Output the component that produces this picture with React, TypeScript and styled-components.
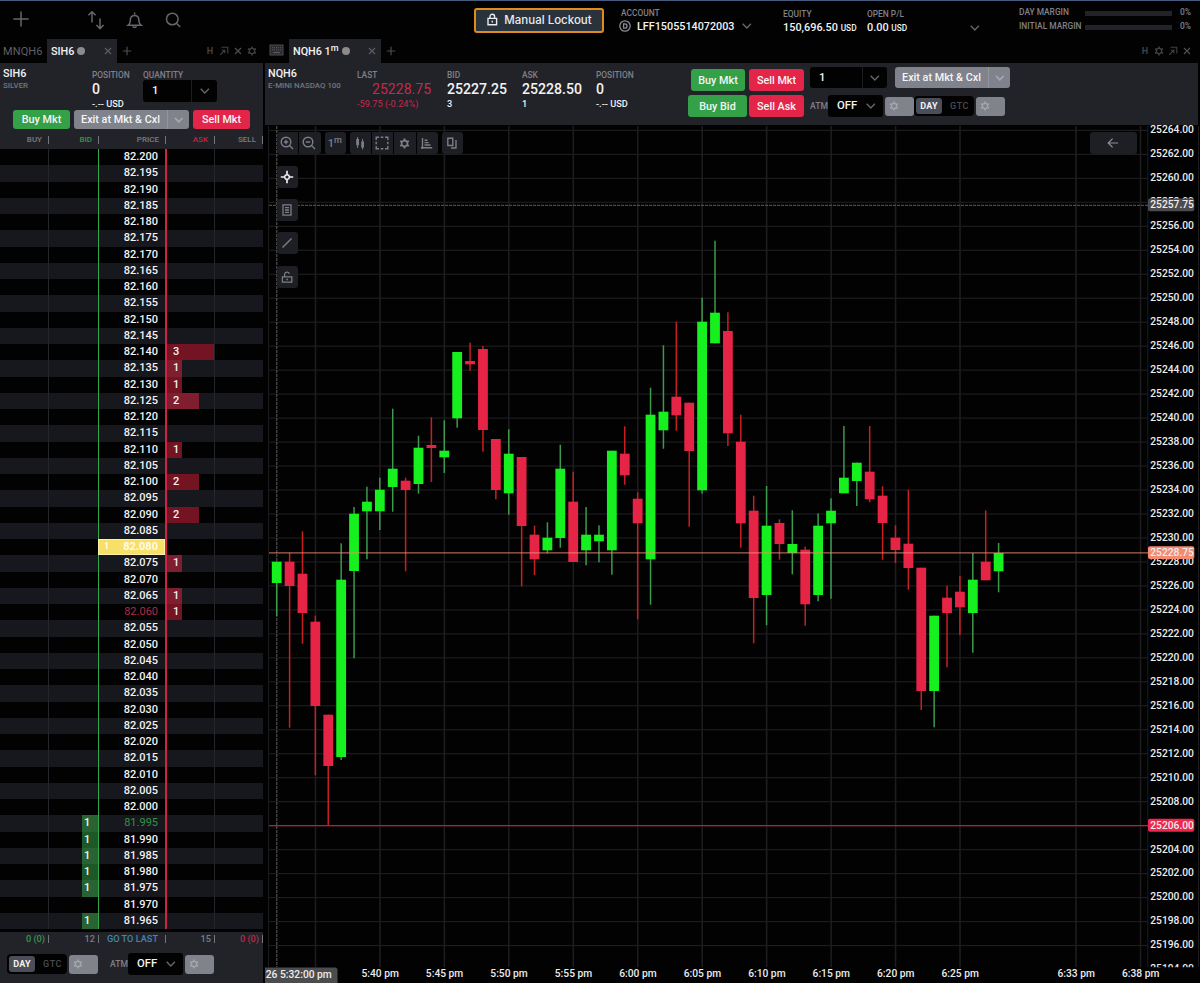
import { ReactNode } from "react";
import styled, { createGlobalStyle } from "styled-components";

const GlobalStyle = createGlobalStyle`
  * {
    box-sizing: border-box;
  }
  body {
    margin: 0;
    background: #000000;
    overflow: hidden;
    font-family: Roboto, "Liberation Sans", sans-serif;
  }
`;

const Page = styled.div`
  width: 1200px;
  height: 983px;
  display: flex;
  flex-direction: column;
  background: #020203;
  color: #f2f2f3;
  font-weight: 500;
  overflow: hidden;
  white-space: nowrap;
`;

const TopBar = styled.header`
  height: 39px;
  flex: none;
  display: flex;
  border-top: 1px solid #45597c;
`;

const TopIcon = styled.div<{ $ml: number }>`
  display: flex;
  width: 20px;
  height: 20px;
  margin: 9px 0 0 ${(p) => p.$ml}px;
  color: #66676b;
`;

const Lockout = styled.button`
  display: flex;
  align-items: center;
  justify-content: center;
  gap: 5px;
  width: 130px;
  height: 25px;
  margin: 7px 0 0 291px;
  padding: 0 0 2px;
  border: 2px solid #de8c1c;
  border-radius: 3px;
  background: #2a323c;
  color: #e9ebee;
  font: 500 11.5px Inter, sans-serif;
`;

const Account = styled.div`
  width: 162px;
  margin: 7px 0 0 17px;
`;

const AccountRow = styled.div`
  display: flex;
  align-items: center;
  gap: 6px;
  height: 14px;
  margin: 0 0 0 -2px;
  font-size: 10.8px;
`;

const Label = styled.div`
  height: 11px;
  line-height: 11px;
  font-size: 8.4px;
  color: #808188;
`;

const TopStat = styled.div<{ $w: number }>`
  width: ${(p) => p.$w}px;
  margin-top: 8px;
`;

const TopValue = styled.div`
  height: 14px;
  line-height: 14px;
  margin-top: 1px;
  font-size: 10.9px;
  small {
    font-size: 8.3px;
  }
`;

const TopChevron = styled.div`
  display: flex;
  margin: 21px 37px 0 -1px;
`;

const Margins = styled.div`
  width: 172px;
  margin: 4px 0 0 1px;
`;

const MarginRow = styled.div`
  display: flex;
  align-items: center;
  height: 14px;
  font-size: 8.4px;
  color: #808188;
  span {
    width: 66px;
  }
`;

const MarginBar = styled.div`
  width: 88px;
  height: 5px;
  margin: 2px 8px 0 0;
  background: #222329;
`;

const Workspace = styled.div`
  flex: 1;
  display: flex;
  gap: 2px;
`;

const LadderPanel = styled.section`
  width: 263px;
  display: flex;
  flex-direction: column;
`;

const ChartPanel = styled.section`
  width: 935px;
  display: flex;
  flex-direction: column;
`;

const TabRow = styled.div`
  height: 24px;
  flex: none;
  display: flex;
  align-items: center;
  color: #4c4d52;
`;

const IdleTab = styled.div`
  width: 47px;
  padding-left: 3px;
  font-size: 11px;
  font-weight: 400;
  letter-spacing: 0.1px;
  color: #5f6065;
`;

const ActiveTab = styled.div<{ $w: number }>`
  width: ${(p) => p.$w}px;
  height: 24px;
  display: flex;
  align-items: center;
  gap: 3px;
  padding: 0 4px 0 4px;
  background: #222329;
  color: #f2f2f3;
  font-size: 10.8px;
  svg {
    margin-left: auto;
  }
`;

const Minute = styled.span`
  sup {
    font-size: 9px;
    line-height: 0;
    vertical-align: 4px;
  }
`;

const Dot = styled.i`
  width: 8px;
  height: 8px;
  border-radius: 50%;
  background: #8a8b8d;
`;

const KeyboardSlot = styled.div`
  width: 24px;
  display: flex;
  padding: 0 0 2px 4px;
`;

const PlusSlot = styled.div`
  display: flex;
  margin-left: 5px;
`;

const WindowTools = styled.div<{ $mr: number }>`
  display: flex;
  align-items: center;
  gap: 4px;
  margin-left: auto;
  margin-right: ${(p) => p.$mr}px;
  opacity: 0.85;
  svg {
    display: block;
  }
`;

const LadderHead = styled.div`
  height: 70px;
  flex: none;
  background: #222329;
`;

const InfoRow = styled.div`
  display: flex;
  height: 47px;
  padding: 4px 0 0 3px;
`;

const Instrument = styled.div<{ $w: number }>`
  width: ${(p) => p.$w}px;
  font-size: 10.8px;
  line-height: 14px;
  small {
    display: block;
    height: 10px;
    line-height: 10px;
    font-size: 7.9px;
    color: #74757c;
  }
`;

const Stat = styled.div<{ $w: number }>`
  width: ${(p) => p.$w}px;
  padding-top: 2px;
`;

const StatLabel = styled(Label)`
  line-height: 12px;
`;

const Big = styled.div<{ $red?: boolean }>`
  height: 18px;
  line-height: 18px;
  font-size: 14.1px;
  ${(p) => p.$red && "color: #c32a4a; font-weight: 400; padding-left: 15px;"}
`;

const Sub = styled.div<{ $red?: boolean }>`
  height: 12px;
  line-height: 12px;
  font-size: 9.2px;
  ${(p) => p.$red && "color: #c32a4a; font-weight: 400;"}
`;

const Select = styled.div<{ $w: number; $h: number; $split?: number }>`
  width: ${(p) => p.$w}px;
  height: ${(p) => p.$h}px;
  flex: none;
  display: flex;
  border-radius: 3px;
  background: #020203;
  font-size: 11.3px;
  line-height: ${(p) => p.$h}px;
  > span {
    flex: 1;
    padding-left: 9px;
  }
  > div {
    width: ${(p) => p.$split ?? 25}px;
    display: flex;
    align-items: center;
    justify-content: center;
    border-left: 1px solid ${(p) => (p.$split ? "#1c1d22" : "transparent")};
  }
`;

const ButtonRow = styled.div`
  display: flex;
  gap: 4px;
  padding-left: 13px;
`;

const fills = { buy: "#34a149", sell: "#e32549", grey: "#80838c" };

const Btn = styled.button<{ $kind: keyof typeof fills; $w: number; $h: number }>`
  width: ${(p) => p.$w}px;
  height: ${(p) => p.$h}px;
  flex: none;
  display: flex;
  align-items: center;
  justify-content: center;
  padding: 0;
  border: none;
  border-radius: 3px;
  background: ${(p) => fills[p.$kind]};
  color: #f4f5f6;
  font: 500 10.8px Roboto, sans-serif;
`;

const ExitMain = styled.span`
  flex: 1;
  text-align: center;
`;

const ExitArrow = styled.span`
  width: 22px;
  height: 100%;
  display: flex;
  align-items: center;
  justify-content: center;
  border-left: 1px solid #94969e;
`;

const Columns = styled.div`
  height: 16px;
  flex: none;
  display: flex;
  background: #222329;
  font-size: 8px;
  line-height: 13px;
  color: #808188;
`;

const columnColors = { plain: "#7b7c83", green: "#34984a", red: "#b82a48", blue: "#4384b5" };

const Column = styled.div<{ $w: number; $tone?: keyof typeof columnColors }>`
  width: ${(p) => p.$w}px;
  position: relative;
  padding-right: 7px;
  text-align: right;
  color: ${(p) => columnColors[p.$tone ?? "plain"]};
  &::after {
    content: "";
    position: absolute;
    right: 0;
    top: 3px;
    width: 1px;
    height: 8px;
    background: #74757c;
  }
`;

const Ladder = styled.div`
  height: 783px;
  flex: none;
`;

const LadderRow = styled.div<{ $odd: boolean }>`
  display: flex;
  height: 16.255px;
  line-height: 15px;
  background: ${(p) => (p.$odd ? "#17181d" : "#020203")};
  font-size: 11px;
`;

const Cell = styled.div<{ $w: number; $line: string; $lw?: number }>`
  width: ${(p) => p.$w}px;
  height: 100%;
  display: flex;
  border-right: ${(p) => p.$lw ?? 1}px solid ${(p) => p.$line};
`;

const BidSize = styled.div`
  width: 16px;
  margin-left: auto;
  padding-left: 2px;
  background: rgba(56, 168, 72, 0.52);
`;

const AskSize = styled.div<{ $qty: number }>`
  width: ${(p) => [0, 15, 32, 48][p.$qty]}px;
  padding-left: 6px;
  background: rgba(230, 35, 65, 0.5);
`;

const priceColors = { normal: "#f2f2f3", low: "#b02a46", high: "#309345", last: "#fffbe8" };

const Price = styled.div<{ $tone: keyof typeof priceColors }>`
  flex: 1;
  display: flex;
  justify-content: space-between;
  padding: 0 7px 0 7px;
  color: ${(p) => priceColors[p.$tone]};
  font-weight: ${(p) => (p.$tone === "normal" ? 500 : p.$tone === "last" ? 700 : 400)};
  ${(p) =>
    p.$tone === "last" &&
    `
    margin-left: -1px;
    padding: 0 6px 0 5px;
    border: 1px solid #fdf0a8;
    background: #f8df68;
    line-height: 13px;
  `}
  small {
    font-size: 9px;
  }
`;

const LadderFoot = styled.div`
  flex: 1;
  background: #222329;
`;

const TotalsRow = styled(Columns)`
  height: 21px;
  font-size: 9.2px;
  line-height: 13px;
  ${Column} {
    padding-right: 4px;
  }
`;

const Tint = styled.span<{ $tone: keyof typeof columnColors }>`
  color: ${(p) => columnColors[p.$tone]};
  ${(p) => p.$tone === "blue" && "font-size: 9.2px; margin-right: 4px;"}
`;

const ControlRow = styled.div<{ $pl: number }>`
  display: flex;
  align-items: center;
  height: 22px;
  padding-left: ${(p) => p.$pl}px;
`;

const Tif = styled.div`
  width: 60px;
  height: 20px;
  flex: none;
  display: flex;
  align-items: center;
  padding: 2px;
  border-radius: 4px;
  background: #020203;
  font-size: 9px;
  letter-spacing: 0.5px;
  color: #4a4b51;
  b {
    width: 26px;
    height: 16px;
    margin-right: 8px;
    border-radius: 3px;
    background: #4b4d58;
    color: #f2f2f3;
    line-height: 16px;
    text-align: center;
    letter-spacing: 0.2px;
    font-weight: 700;
  }
`;

const GearBtn = styled.div<{ $ml: number }>`
  width: 29px;
  height: 19px;
  flex: none;
  display: flex;
  align-items: center;
  margin-left: ${(p) => p.$ml}px;
  padding-left: 4px;
  border-radius: 3px;
  background: #80838c;
  color: #a5a7ae;
`;

const AtmLabel = styled.div<{ $ml: number }>`
  width: 18px;
  margin-left: ${(p) => p.$ml}px;
  font-size: 8.6px;
  color: #808188;
`;

const ChartHead = styled.div`
  height: 62px;
  width: 933px;
  flex: none;
  display: flex;
  padding: 4px 0 0 3px;
  background: #222329;
`;

const TradeButtons = styled.div`
  width: 122px;
  display: flex;
  flex-wrap: wrap;
  justify-content: flex-end;
  align-content: flex-start;
  gap: 4px 2px;
  padding: 2px 6px 0 0;
`;

const Controls = styled.div`
  display: flex;
  flex-direction: column;
  gap: 7px;
`;

const ExitRow = styled.div`
  display: flex;
  gap: 8px;
`;

const ChartBody = styled.div`
  position: relative;
  flex: 1;
`;

const Toolbar = styled.div`
  position: absolute;
  left: 12px;
  top: 7px;
  display: flex;
  gap: 4px;
`;

const ToolGroup = styled.div`
  display: flex;
  gap: 1px;
  border-radius: 3px;
  overflow: hidden;
`;

const SideTools = styled.div`
  position: absolute;
  left: 12px;
  top: 41px;
  display: flex;
  flex-direction: column;
  gap: 11.2px;
`;

const Tool = styled.div<{ $w?: number; $round?: boolean }>`
  width: ${(p) => p.$w ?? 21.3}px;
  height: 22px;
  display: flex;
  align-items: center;
  justify-content: center;
  padding-right: 1px;
  border-radius: ${(p) => (p.$round ? 3 : 0)}px;
  background: #1e1f24;
  color: #7c7e85;
  font-size: 11px;
`;

const BackTool = styled.div`
  position: absolute;
  left: 825px;
  top: 7px;
`;

type IconProps = { size?: number; w?: number; children: ReactNode; box?: number };

const Icon = ({ size = 12, box = 12, w = 1, children }: IconProps) => (
  <svg
    width={size}
    height={size}
    viewBox={`0 0 ${box} ${box}`}
    fill="none"
    stroke="currentColor"
    strokeWidth={w}
  >
    {children}
  </svg>
);

const Chevron = () => (
  <Icon size={12} w={1.4}>
    <path d="M1.7 3.8l4.1 4.2L9.900 3.800" stroke="#66676e" />
  </Icon>
);

const PaleChevron = () => (
  <Icon size={12} w={1.6}>
    <path d="M2 4l3.8 3.800L9.600 4" stroke="#a8aab1" />
  </Icon>
);

const Cross = () => (
  <Icon size={10} box={10} w={1.2}>
    <path d="M2 2l6 6M8 2L2 8" stroke="#5c5d63" />
  </Icon>
);

const Plus = () => (
  <Icon size={10} box={10} w={1.2}>
    <path d="M5 .8v8.4M.8 5h8.4" />
  </Icon>
);

const Gear = ({ size = 10, w = 1.6 }: { size?: number; w?: number }) => (
  <Icon size={size} w={w}>
    <circle cx="6" cy="6" r="3.2" />
    <path
      d="M6 .6v2M6 9.4v2M1.3 3.3l1.7 1M9 7.7l1.7 1M1.3 8.7l1.7-1M9 4.3l1.7-1"
      strokeWidth={w + 0.3}
    />
  </Icon>
);

const Popout = () => (
  <Icon size={10} box={10} w={1.1}>
    <path d="M2.5 1.2h6.3v6.3M1.2 8.8l4.3-4.3M2.8 4.2h3v3" />
  </Icon>
);

const LetterH = styled.span`
  width: 10px;
  text-align: center;
  font-size: 9px;
  font-weight: 700;
`;

const asks: Record<string, number> = {
  "82.140": 3,
  "82.135": 1,
  "82.130": 1,
  "82.125": 2,
  "82.110": 1,
  "82.100": 2,
  "82.090": 2,
  "82.075": 1,
  "82.065": 1,
  "82.060": 1,
};

const bids = ["81.995", "81.990", "81.985", "81.980", "81.975", "81.965"];

const tones: Record<string, keyof typeof priceColors> = {
  "82.080": "last",
  "82.060": "low",
  "81.995": "high",
};

const prices = Array.from({ length: 48 }, (_, i) => (82.2 - i * 0.005).toFixed(3));

// direction, body top, body bottom, wick top, wick bottom
type Candle = ["g" | "r", number, number, number, number];

const candles: Candle[] = [
  ["g", 561.7, 583, 561.7, 616],
  ["r", 561.7, 586, 552.7, 727.7],
  ["r", 573.7, 613, 531.3, 643.7],
  ["r", 621.7, 706, 615.7, 775.3],
  ["r", 714.7, 766, 714.7, 826],
  ["g", 579.7, 757, 543.3, 760],
  ["g", 513.7, 571, 507, 658.3],
  ["g", 501.7, 511.3, 486.7, 559.3],
  ["g", 489.7, 511.3, 477.7, 530],
  ["g", 468.7, 487, 408.7, 511.7],
  ["r", 480.7, 490, 477.7, 571.3],
  ["g", 447.7, 484, 435.7, 493.7],
  ["r", 445, 448, 417.3, 482],
  ["g", 450.7, 457.3, 420.3, 473],
  ["g", 352, 418.3, 352, 427.7],
  ["r", 361, 364.3, 342.7, 370.7],
  ["r", 349, 430, 346, 451.7],
  ["r", 439, 490, 439, 499.3],
  ["g", 453.7, 493.3, 429.3, 514.7],
  ["r", 457, 526, 457, 586.3],
  ["r", 534.7, 559.3, 525.7, 575],
  ["g", 537.7, 550.3, 522.3, 553.3],
  ["g", 468.7, 538, 444.7, 547.7],
  ["r", 501.7, 562, 471.7, 562],
  ["g", 534.7, 550.3, 507, 565.3],
  ["g", 534.7, 541.3, 525.3, 562.3],
  ["g", 450.7, 550.3, 450.7, 574.7],
  ["r", 453.7, 475.3, 426.3, 484.7],
  ["r", 498.7, 523.3, 492.3, 619.3],
  ["g", 414.7, 559.3, 387.7, 604.7],
  ["g", 411.7, 430.3, 345.3, 448.7],
  ["r", 396.7, 415.3, 321.7, 430.7],
  ["r", 402.7, 451, 402.7, 526.7],
  ["g", 321.7, 490.3, 297.7, 493.7],
  ["g", 312.7, 343.3, 240.7, 343.3],
  ["r", 331, 433.3, 312.3, 446],
  ["r", 441.7, 523.3, 414.7, 547.7],
  ["r", 510.7, 598, 495.7, 643.3],
  ["g", 525.7, 595, 486, 625.3],
  ["r", 523, 544, 519.3, 559.7],
  ["g", 544, 553, 510.3, 574.3],
  ["r", 549.7, 604.3, 546.7, 625.7],
  ["g", 525.7, 595, 513.3, 601.3],
  ["g", 510.7, 523.3, 498.3, 598.7],
  ["g", 477.7, 493.3, 426, 493.3],
  ["g", 462.7, 481, 462.7, 506],
  ["r", 471.7, 499.3, 426, 502.3],
  ["r", 495.7, 523, 486.3, 559.7],
  ["r", 537.7, 550, 525.3, 563],
  ["r", 543.7, 568, 489.7, 589.7],
  ["r", 567.7, 691, 567.7, 710],
  ["g", 615.7, 691, 615.7, 727.3],
  ["r", 597.7, 613, 585.7, 667.3],
  ["r", 591.7, 607.3, 576, 635],
  ["g", 579.7, 613, 553, 652.7],
  ["r", 561.7, 580.3, 510.3, 580.3],
  ["g", 553, 571.3, 543, 592.3],
];

const minuteX = (i: number) => 276.6 + i * 12.891;
const priceY = (p: number) => 130.4 + (25264 - p) * 11.987;

const gridPrices = Array.from({ length: 36 }, (_, i) => 25264 - i * 2);

const timeMarks: [number, string][] = [
  [3, ""],
  [8, "5:40 pm"],
  [13, "5:45 pm"],
  [18, "5:50 pm"],
  [23, "5:55 pm"],
  [28, "6:00 pm"],
  [33, "6:05 pm"],
  [38, "6:10 pm"],
  [43, "6:15 pm"],
  [48, "6:20 pm"],
  [53, "6:25 pm"],
  [62, "6:33 pm"],
  [67, "6:38 pm"],
];

const PlotSvg = styled.svg`
  display: block;
  text {
    font: 500 10.25px Roboto, sans-serif;
    fill: #ececed;
  }
`;

function PriceTag({ price, fill }: { price: number; fill: string }) {
  const y = priceY(price);
  return (
    <g>
      <rect x="1148" y={y - 6.8} width="46.3" height="12.8" rx="2" fill={fill} />
      <text x="1150.3" y={y + 2.9}>
        {price.toFixed(2)}
      </text>
    </g>
  );
}

function Plot() {
  return (
    <PlotSvg width="935" height="858" viewBox="265 125 935 858">
      <clipPath id="plotArea">
        <rect x="265" y="125" width="935" height="842.3" />
      </clipPath>
      <g clipPath="url(#plotArea)">
        {gridPrices.map((p) => (
          <rect key={p} x="269" y={priceY(p) - 0.6} width="879" height="1.2" fill="#1d1d1f" />
        ))}
        {timeMarks.map(([i]) => (
          <rect key={i} x={minuteX(i) - 0.6} y="126" width="1.6" height="842" fill="#1d1d1f" />
        ))}
        <path d="M268.6 126V967M1147.8 126V967M1198.5 126V967" stroke="#1d1d20" />
        <path d="M269 205.3H1148" stroke="#5e5e5e" strokeDasharray="3 1" />
        <path d="M276.8 126V967" stroke="#5e5e5e" strokeDasharray="3 1" />
        {candles.map(([dir, top, bottom, high, low], i) => (
          <g key={i}>
            <rect
              x={minuteX(i) - 0.65}
              y={high}
              width="1.5"
              height={low - high}
              fill={dir === "g" ? "#3d9a4c" : "#c91f22"}
            />
            <rect
              x={minuteX(i) - 4.8}
              y={top}
              width="9.8"
              height={bottom - top}
              fill={dir === "g" ? "#16f01e" : "#e62546"}
            />
          </g>
        ))}
        <path d="M269 552.9H1148" stroke="#f08a70" strokeOpacity="0.72" strokeWidth="1.4" />
        <path d="M269 825.7H1148" stroke="#c41a38" strokeWidth="1.3" />
        {gridPrices.map((p) => (
          <text key={p} x="1150.3" y={priceY(p) + 2.9}>
            {p.toFixed(2)}
          </text>
        ))}
      </g>
      <PriceTag price={25257.75} fill="#4c4c4e" />
      <PriceTag price={25228.75} fill="#f48b70" />
      <PriceTag price={25206} fill="#f0274c" />
      {timeMarks.map(([i, label]) => (
        <text key={i} x={minuteX(i) + 0.4} y="977.4" textAnchor="middle">
          {label}
        </text>
      ))}
      <path d="M265 967.5h70a2.5 2.5 0 0 1 2.5 2.500v13H265z" fill="#4c4c4e" />
      <text x="265.8" y="977.7">
        26 5:32:00 pm
      </text>
    </PlotSvg>
  );
}

function ExitButton({ w, h }: { w: number; h: number }) {
  return (
    <Btn $kind="grey" $w={w} $h={h}>
      <ExitMain>Exit at Mkt &amp; Cxl</ExitMain>
      <ExitArrow>
        <PaleChevron />
      </ExitArrow>
    </Btn>
  );
}

function TimeInForce() {
  return (
    <Tif>
      <b>DAY</b>GTC
    </Tif>
  );
}

function LadderView() {
  return (
    <LadderPanel>
      <TabRow>
        <IdleTab>MNQH6</IdleTab>
        <ActiveTab $w={70}>
          SIH6 <Dot />
          <Cross />
        </ActiveTab>
        <PlusSlot>
          <Plus />
        </PlusSlot>
        <WindowTools $mr={6}>
          <LetterH>H</LetterH>
          <Popout />
          <Cross />
          <Gear />
        </WindowTools>
      </TabRow>
      <LadderHead>
        <InfoRow>
          <Instrument $w={89}>
            SIH6<small>SILVER</small>
          </Instrument>
          <Stat $w={51}>
            <StatLabel>POSITION</StatLabel>
            <Big>0</Big>
            <Sub>-.-- USD</Sub>
          </Stat>
          <Stat $w={80}>
            <StatLabel>QUANTITY</StatLabel>
            <Select $w={74} $h={22} $split={26}>
              <span>1</span>
              <div>
                <Chevron />
              </div>
            </Select>
          </Stat>
        </InfoRow>
        <ButtonRow>
          <Btn $kind="buy" $w={57} $h={19}>
            Buy Mkt
          </Btn>
          <ExitButton w={115} h={19} />
          <Btn $kind="sell" $w={57} $h={19}>
            Sell Mkt
          </Btn>
        </ButtonRow>
      </LadderHead>
      <Columns>
        <Column $w={49}>BUY</Column>
        <Column $w={50} $tone="green">
          BID
        </Column>
        <Column $w={67}>PRICE</Column>
        <Column $w={49} $tone="red">
          ASK
        </Column>
        <Column $w={48}>SELL</Column>
      </Columns>
      <Ladder>
        {prices.map((price, i) => {
          const tone = tones[price] ?? "normal";
          return (
            <LadderRow key={price} $odd={i % 2 === 1}>
              <Cell $w={49} $line="#25262b" />
              <Cell $w={50} $line="#35a64c">
                {bids.includes(price) && <BidSize>1</BidSize>}
              </Cell>
              <Cell $w={68} $line="#cf2245" $lw={2}>
                <Price $tone={tone}>
                  <small>{tone === "last" ? "1" : ""}</small>
                  {price}
                </Price>
              </Cell>
              <Cell $w={48} $line="#25262b">
                {asks[price] && <AskSize $qty={asks[price]}>{asks[price]}</AskSize>}
              </Cell>
            </LadderRow>
          );
        })}
      </Ladder>
      <LadderFoot>
        <TotalsRow>
          <Column $w={49}>
            <Tint $tone="green">0 (0)</Tint>
          </Column>
          <Column $w={50}>12</Column>
          <Column $w={67}>
            <Tint $tone="blue">GO TO LAST</Tint>
          </Column>
          <Column $w={49}>15</Column>
          <Column $w={48}>
            <Tint $tone="red">0 (0)</Tint>
          </Column>
        </TotalsRow>
        <ControlRow $pl={7}>
          <TimeInForce />
          <GearBtn $ml={2}>
            <Gear />
          </GearBtn>
          <AtmLabel $ml={12}>ATM</AtmLabel>
          <Select $w={55} $h={22}>
            <span>OFF</span>
            <div>
              <Chevron />
            </div>
          </Select>
          <GearBtn $ml={2}>
            <Gear />
          </GearBtn>
        </ControlRow>
      </LadderFoot>
    </LadderPanel>
  );
}

function ChartView() {
  return (
    <ChartPanel>
      <TabRow>
        <KeyboardSlot>
          <svg width="15" height="12" viewBox="0 0 15 12" fill="none">
            <rect x="1" y="1" width="13" height="10" fill="#2b2c30" stroke="#4c4d52" />
            <path d="M3 3.7h9M3 5.9h9" stroke="#5c5d62" strokeDasharray="1 1" />
            <path d="M4 8.5h7" stroke="#5c5d62" />
          </svg>
        </KeyboardSlot>
        <ActiveTab $w={92}>
          <Minute>
            NQH6 1<sup>m</sup>
          </Minute>
          <Dot />
          <Cross />
        </ActiveTab>
        <PlusSlot>
          <Plus />
        </PlusSlot>
        <WindowTools $mr={8}>
          <LetterH>H</LetterH>
          <Gear />
          <Popout />
          <Cross />
        </WindowTools>
      </TabRow>
      <ChartHead>
        <Instrument $w={89}>
          NQH6<small>E-MINI NASDAQ 100</small>
        </Instrument>
        <Stat $w={90}>
          <StatLabel>LAST</StatLabel>
          <Big $red>25228.75</Big>
          <Sub $red>-59.75 (-0.24%)</Sub>
        </Stat>
        <Stat $w={75}>
          <StatLabel>BID</StatLabel>
          <Big>25227.25</Big>
          <Sub>3</Sub>
        </Stat>
        <Stat $w={74}>
          <StatLabel>ASK</StatLabel>
          <Big>25228.50</Big>
          <Sub>1</Sub>
        </Stat>
        <Stat $w={92}>
          <StatLabel>POSITION</StatLabel>
          <Big>0</Big>
          <Sub>-.-- USD</Sub>
        </Stat>
        <TradeButtons>
          <Btn $kind="buy" $w={54} $h={22}>
            Buy Mkt
          </Btn>
          <SellBtn $kind="sell" $w={55} $h={22}>
            Sell Mkt
          </SellBtn>
          <Btn $kind="buy" $w={59} $h={22}>
            Buy Bid
          </Btn>
          <Btn $kind="sell" $w={55} $h={22}>
            Sell Ask
          </Btn>
        </TradeButtons>
        <Controls>
          <ExitRow>
            <Select $w={77} $h={21} $split={25}>
              <span>1</span>
              <div>
                <Chevron />
              </div>
            </Select>
            <ExitButton w={115} h={21} />
          </ExitRow>
          <ControlRow $pl={0}>
            <AtmLabel $ml={0}>ATM</AtmLabel>
            <Select $w={55} $h={22}>
              <span>OFF</span>
              <div>
                <Chevron />
              </div>
            </Select>
            <GearBtn $ml={2}>
              <Gear />
            </GearBtn>
            <TimeInForce />
            <GearBtn $ml={2}>
              <Gear />
            </GearBtn>
          </ControlRow>
        </Controls>
      </ChartHead>
      <ChartBody>
        <Plot />
        <Toolbar>
          <ToolGroup>
            <Tool>
              <Icon size={14} box={14} w={1.4}>
                <circle cx="6" cy="6" r="4.8" />
                <path d="M9.5 9.5l3.5 3.5M6 3.8v4.4M3.8 6h4.4" />
              </Icon>
            </Tool>
            <Tool>
              <Icon size={14} box={14} w={1.4}>
                <circle cx="6" cy="6" r="4.8" />
                <path d="M9.5 9.5l3.5 3.5M3.8 6h4.4" />
              </Icon>
            </Tool>
          </ToolGroup>
          <ToolGroup>
            <Tool>
              <Minute>
                1<sup>m</sup>
              </Minute>
            </Tool>
          </ToolGroup>
          <ToolGroup>
            <Tool>
              <Icon size={14} box={14}>
                <path d="M4.6 1v11M9.6 3v10.5" />
                <path d="M4.6 3v6.2M9.6 5.5v6" strokeWidth="2.8" />
              </Icon>
            </Tool>
            <Tool>
              <Icon size={14} box={14} w={1.4}>
                <path d="M1.2 4V1.2H4M10 1.2h2.8V4M12.8 10v2.8H10M4 12.8H1.2V10M5.7 1.2h2.6M5.7 12.8h2.6M1.2 5.7v2.6M12.8 5.7v2.6" />
              </Icon>
            </Tool>
            <Tool>
              <Gear size={11} w={1.8} />
            </Tool>
            <Tool>
              <Icon size={13} box={13} w={1.4}>
                <path d="M2.5 1v11M.8 10.8h11.4M4.5 3.2h3M4.5 5.6h4.2M4.5 8h6" />
              </Icon>
            </Tool>
          </ToolGroup>
          <ToolGroup>
            <Tool>
              <Icon size={12} w={1.4}>
                <path d="M1.8 1.3h5v7.2h-5zM10 3v8H5" />
              </Icon>
            </Tool>
          </ToolGroup>
        </Toolbar>
        <SideTools>
          <Tool $round>
            <Icon size={14} box={14} w={1.7}>
              <circle cx="7" cy="7" r="2.3" stroke="#eeeef0" strokeWidth="1.5" />
              <path d="M7 .8v3.600M7 9.600v3.600M.8 7h3.600M9.600 7h3.600" stroke="#eeeef0" />
            </Icon>
          </Tool>
          <Tool $round>
            <Icon size={12} w={1.3}>
              <path d="M2 .8h8v10.4H2zM4 3.600h4M4 6h4M4 8.400h4" />
            </Icon>
          </Tool>
          <Tool $round>
            <Icon size={12} w={1.5}>
              <path d="M1.5 10.5l9-9" />
            </Icon>
          </Tool>
          <Tool $round>
            <Icon size={12} w={1.3}>
              <path d="M1.4 5.8h9.4v5.4H1.4zM3.6 5.5V3.2a2.4 2.4 0 0 1 4.7-.4" />
              <path d="M5.3 8.5h1.6" strokeWidth="1.6" />
            </Icon>
          </Tool>
        </SideTools>
        <BackTool>
          <Tool $w={47} $round>
            <Icon size={12} w={1.2}>
              <path d="M11 6H1.4M5.6 1.6L1.2 6l4.4 4.4" stroke="#8f9097" />
            </Icon>
          </Tool>
        </BackTool>
      </ChartBody>
    </ChartPanel>
  );
}

const SellBtn = styled(Btn)`
  margin-left: 2px;
`;

export default function App() {
  return (
    <Page>
      <GlobalStyle />
      <TopBar>
        <TopIcon $ml={11}>
          <Icon size={20} box={20} w={1.5}>
            <path d="M10 1.5v15M2.400 9h15.200" />
          </Icon>
        </TopIcon>
        <TopIcon $ml={55}>
          <Icon size={20} box={20} w={1.5}>
            <path d="M6 12.5V1.8M2.4 5.3L6 1.7l3.6 3.6M14 8.5v10M10.4 15l3.6 3.6 3.6-3.6" />
          </Icon>
        </TopIcon>
        <TopIcon $ml={19}>
          <Icon size={20} box={20} w={1.5}>
            <path d="M3.2 15.2c1.7-1.2 2.2-2.6 2.2-6.2a4.3 4.3 0 0 1 8.4 0c0 3.6.5 5 2.2 6.2zM9.6 4.6V2.6M7.8 16.2a1.9 1.9 0 0 0 3.6 0" />
          </Icon>
        </TopIcon>
        <TopIcon $ml={18}>
          <Icon size={20} box={20} w={1.5}>
            <circle cx="9.3" cy="9" r="5.8" />
            <path d="M13.4 13.2l3.8 3.8" />
          </Icon>
        </TopIcon>
        <Lockout>
          <Icon size={13} box={13} w={1.4}>
            <path d="M2 5.4h8.6v6.4H2zM4 5.2V3.5a2.3 2.3 0 0 1 4.6 0v1.7M6.3 7.8v1.7" />
          </Icon>
          Manual Lockout
        </Lockout>
        <Account>
          <Label>ACCOUNT</Label>
          <AccountRow>
            <Icon size={12} w={1.3}>
              <circle cx="6" cy="6" r="5.2" stroke="#8a8b90" />
              <path d="M4.6 3.8v4.4h1.2a2.2 2.2 0 0 0 0-4.4z" stroke="#8a8b90" />
            </Icon>
            LFF1505514072003
            <Chevron />
          </AccountRow>
        </Account>
        <TopStat $w={84}>
          <Label>EQUITY</Label>
          <TopValue>
            150,696.50 <small>USD</small>
          </TopValue>
        </TopStat>
        <TopStat $w={103}>
          <Label>OPEN P/L</Label>
          <TopValue>
            0.00 <small>USD</small>
          </TopValue>
        </TopStat>
        <TopChevron>
          <Chevron />
        </TopChevron>
        <Margins>
          <MarginRow>
            <span>DAY MARGIN</span>
            <MarginBar />
            0%
          </MarginRow>
          <MarginRow>
            <span>INITIAL MARGIN</span>
            <MarginBar />
            0%
          </MarginRow>
        </Margins>
      </TopBar>
      <Workspace>
        <LadderView />
        <ChartView />
      </Workspace>
    </Page>
  );
}
